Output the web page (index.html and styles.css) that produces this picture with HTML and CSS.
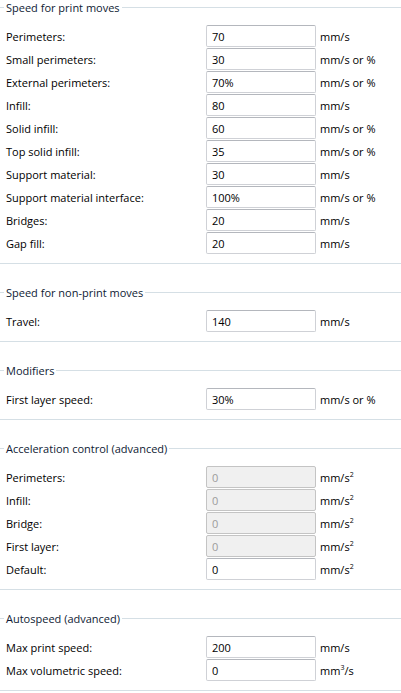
FILE: index.html
```html
<!DOCTYPE html>
<html lang="en">
<head>
    <meta charset="UTF-8">
    <meta name="viewport" content="width=device-width, initial-scale=1.0">
    <title>Print Speed Settings</title>
    <link rel="stylesheet" href="styles.css">
</head>
<body>
    <div class="group">
        <div class="group-title"><span>Speed for print moves</span></div>
        <div class="rows">
            <label class="row"><span class="label">Perimeters:</span><input type="text" value="70"><span class="unit">mm/s</span></label>
            <label class="row"><span class="label">Small perimeters:</span><input type="text" value="30"><span class="unit">mm/s or %</span></label>
            <label class="row"><span class="label">External perimeters:</span><input type="text" value="70%"><span class="unit">mm/s or %</span></label>
            <label class="row"><span class="label">Infill:</span><input type="text" value="80"><span class="unit">mm/s</span></label>
            <label class="row"><span class="label">Solid infill:</span><input type="text" value="60"><span class="unit">mm/s or %</span></label>
            <label class="row"><span class="label">Top solid infill:</span><input type="text" value="35"><span class="unit">mm/s or %</span></label>
            <label class="row"><span class="label">Support material:</span><input type="text" value="30"><span class="unit">mm/s</span></label>
            <label class="row"><span class="label">Support material interface:</span><input type="text" value="100%"><span class="unit">mm/s or %</span></label>
            <label class="row"><span class="label">Bridges:</span><input type="text" value="20"><span class="unit">mm/s</span></label>
            <label class="row"><span class="label">Gap fill:</span><input type="text" value="20"><span class="unit">mm/s</span></label>
        </div>
    </div>

    <div class="group">
        <div class="group-title"><span>Speed for non-print moves</span></div>
        <div class="rows">
            <label class="row"><span class="label">Travel:</span><input type="text" value="140"><span class="unit">mm/s</span></label>
        </div>
    </div>

    <div class="group">
        <div class="group-title"><span>Modifiers</span></div>
        <div class="rows">
            <label class="row"><span class="label">First layer speed:</span><input type="text" value="30%"><span class="unit">mm/s or %</span></label>
        </div>
    </div>

    <div class="group">
        <div class="group-title"><span>Acceleration control (advanced)</span></div>
        <div class="rows">
            <label class="row"><span class="label">Perimeters:</span><input type="text" value="0" disabled><span class="unit">mm/s<sup>2</sup></span></label>
            <label class="row"><span class="label">Infill:</span><input type="text" value="0" disabled><span class="unit">mm/s<sup>2</sup></span></label>
            <label class="row"><span class="label">Bridge:</span><input type="text" value="0" disabled><span class="unit">mm/s<sup>2</sup></span></label>
            <label class="row"><span class="label">First layer:</span><input type="text" value="0" disabled><span class="unit">mm/s<sup>2</sup></span></label>
            <label class="row"><span class="label">Default:</span><input type="text" value="0"><span class="unit">mm/s<sup>2</sup></span></label>
        </div>
    </div>

    <div class="group">
        <div class="group-title"><span>Autospeed (advanced)</span></div>
        <div class="rows">
            <label class="row"><span class="label">Max print speed:</span><input type="text" value="200"><span class="unit">mm/s</span></label>
            <label class="row"><span class="label">Max volumetric speed:</span><input type="text" value="0"><span class="unit">mm<sup>3</sup>/s</span></label>
        </div>
    </div>
</body>
</html>
```

FILE: styles.css
```css
body {
    margin: 0;
    background-color: #fff;
    color: #000;
    font-family: "Open Sans", "Noto Sans", sans-serif;
    font-size: 11px;
}
.group {
    border-bottom: 1px solid #d5dfe5;
    padding-bottom: 8px;
    margin-bottom: 21px;
}
.group-title {
    display: flex;
    align-items: center;
    height: 15px;
}
.group-title::before,
.group-title::after {
    content: "";
    height: 1px;
    background-color: #d5dfe5;
}
.group-title::before {
    width: 4px;
    margin-top: -1px;
}
.group-title::after {
    flex: 1;
    margin-top: -1px;
}
.group-title span {
    padding: 0 2px;
    line-height: 15px;
    color: #0e1a33;
}
.rows {
    margin-top: 10px;
}
.row {
    display: grid;
    grid-template-columns: 200px 110px 1fr;
    align-items: center;
    height: 22px;
    margin-bottom: 1px;
    padding-left: 6px;
}
.row input {
    box-sizing: border-box;
    width: 110px;
    height: 22px;
    margin: 0;
    padding: 0 5px;
    border: 1px solid #cfd1d6;
    border-top-color: #b4b7bd;
    border-radius: 2px;
    font-family: inherit;
    font-size: 11px;
    color: #000;
    background-color: #fff;
    outline: none;
}
.row input:disabled {
    background-color: #f0f0f0;
    border-color: #c4c4c4;
    color: #9c9c9c;
}
.unit {
    padding-left: 4px;
    white-space: nowrap;
}
.unit sup {
    font-size: 7px;
    line-height: 0;
}
```
